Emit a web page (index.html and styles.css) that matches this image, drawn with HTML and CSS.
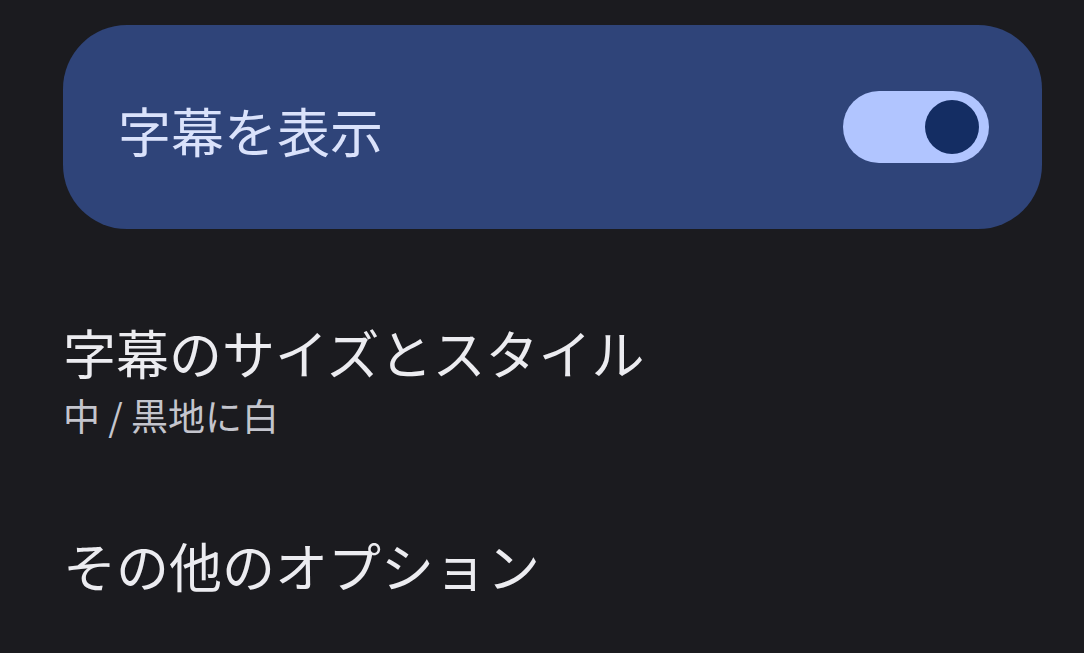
FILE: index.html
```html
<!DOCTYPE html>
<html lang="ja">
<head>
    <meta charset="UTF-8">
    <meta name="viewport" content="width=device-width, initial-scale=1.0">
    <title>字幕</title>
    <link rel="stylesheet" href="styles.css">
</head>
<body>
    <div class="main-switch">
        <span class="main-label">字幕を表示</span>
        <div class="toggle on">
            <div class="thumb"></div>
        </div>
    </div>

    <div class="pref-list">
        <div class="pref">
            <div class="pref-title">字幕のサイズとスタイル</div>
            <div class="pref-summary">中 / 黒地に白</div>
        </div>

        <div class="pref">
            <div class="pref-title">その他のオプション</div>
        </div>
    </div>
</body>
</html>
```

FILE: styles.css
```css
body {
    margin: 0;
    padding: 25px 42px 0 63px;
    background-color: #1b1b1f;
    font-family: 'Noto Sans CJK JP', 'Noto Sans', sans-serif;
    color: #e3e2e6;
}
.main-switch {
    height: 204px;
    box-sizing: border-box;
    display: flex;
    align-items: center;
    justify-content: space-between;
    padding: 0 53px 0 55px;
    background-color: #2f4479;
    border-radius: 64px;
}
.main-label {
    font-size: 53px;
    line-height: 1;
    color: #dae2fb;
    margin-top: 6px;
}
.toggle {
    width: 146px;
    height: 72px;
    border-radius: 36px;
    background-color: #b1c5ff;
    display: flex;
    align-items: center;
    justify-content: flex-end;
    padding-right: 10px;
    box-sizing: border-box;
}
.thumb {
    width: 54px;
    height: 54px;
    border-radius: 50%;
    background-color: #142d63;
}
.pref-list {
    display: flex;
    flex-direction: column;
    gap: 97px;
    padding: 92px 0 0;
}
.pref-title {
    font-size: 53px;
    line-height: 1.2;
    color: #ececf0;
}
.pref-summary {
    font-size: 37px;
    line-height: 1.2;
    margin-top: 8px;
    color: #c4c5cd;
}
```
